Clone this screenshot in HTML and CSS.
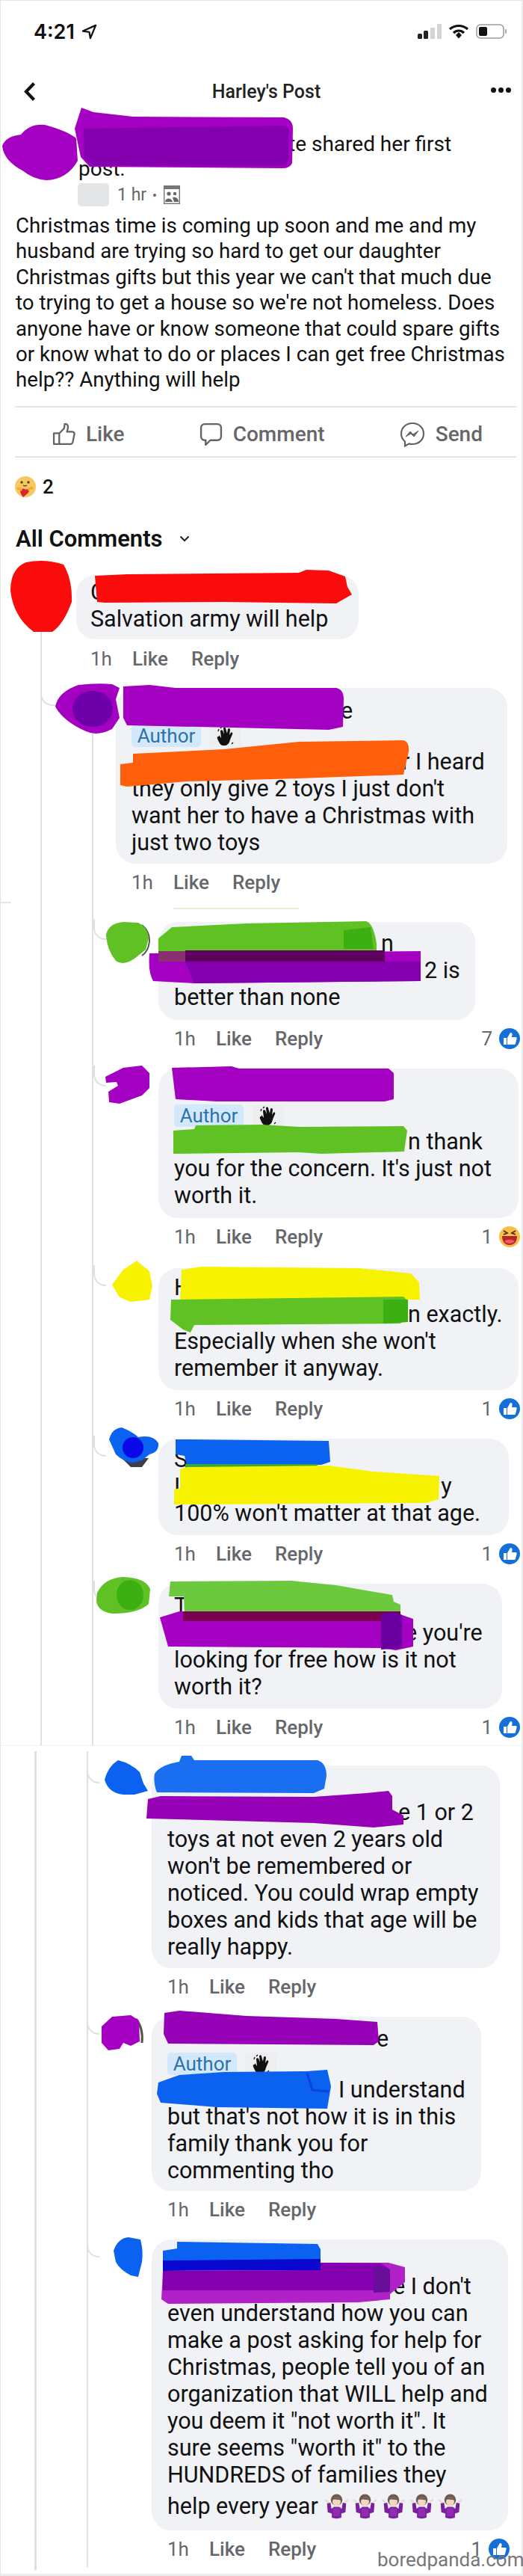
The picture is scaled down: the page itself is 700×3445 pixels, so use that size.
FILE: index.html
```html
<!DOCTYPE html>
<html lang="en">
<head>
<meta charset="UTF-8" />
<meta name="viewport" content="width=device-width, initial-scale=1" />
<title>Harley's Post</title>
<link rel="stylesheet" href="styles.css">
</head>
<body>
<svg class="defs" aria-hidden="true">
  <symbol id="like-badge" viewBox="0 0 28 28">
    <circle cx="14" cy="14" r="14" fill="#1470d8"/>
    <path d="M6 13h4v9H6z M11 13l4-7c2 0 3 1 2.500 3l-.5 3h5c1.500 0 2 1 1.500 2.500l-1.500 6c-.3 1-1 1.500-2 1.500h-9z" fill="#fff"/>
  </symbol>
  <symbol id="wave" viewBox="0 0 24 26">
    <path d="M5 3l2-2M2 7l1-3M20 24l2-2" stroke="#111" stroke-width="1.300" fill="none"/>
    <path d="M3 12l3 4-1-9c0-2 2-2 3-1l2 5-1-8c0-2 3-2 3 0l2 7 1-6c1-2 3-1 3 1l-1 7 2-3c1-1 3 0 2 2l-3 7c-1 6-5 9-10 8-4-1-5-5-7-9-1-2 1-4 2-3z" fill="#111"/>
  </symbol>
  <symbol id="shrug" viewBox="0 0 34 38">
    <path d="M0 10l5 3M34 10l-5 3" stroke="#e8dcc4" stroke-width="2.500" fill="none"/>
    <path d="M3 15L8 14 9.500 23 13 20H21L24.500 23 26 14 31 15 30 28 24 30V36Q17 38.500 10 36V30L4 28Z" fill="#7a1f9e"/>
    <path d="M12 22H22V34H12Z" fill="#8f2cb0"/>
    <circle cx="17" cy="10" r="8.500" fill="#6d5a52"/>
    <ellipse cx="17" cy="12.500" rx="6" ry="6.500" fill="#f5d5bd"/>
    <path d="M10.500 10c2-5 10-5 13 0-4.500 0-9-2-13 0z" fill="#6d5a52"/>
  </symbol>
</svg>

<div class="page">
  <div class="statusbar">
    <div class="clock">
      <span>4:21</span>
      <svg class="loc-arrow" viewBox="0 0 22 22"><path d="M20 2L2 10l9 1.500L12.500 20z" fill="none" stroke="#111" stroke-width="2.400" stroke-linejoin="round"/></svg>
    </div>
    <div class="status-icons">
      <svg class="signal" viewBox="0 0 33 20">
        <rect x="1" y="13" width="6" height="7" rx="1.500" fill="#222"/>
        <rect x="9" y="9" width="6" height="11" rx="1.500" fill="#222"/>
        <rect x="18" y="5" width="6" height="15" rx="1" fill="#d4d4d4"/>
        <rect x="27" y="0" width="6" height="20" rx="1" fill="#d4d4d4"/>
      </svg>
      <svg class="wifi" viewBox="0 0 28 20">
        <path d="M2 7c7-6 17-6 24 0" fill="none" stroke="#111" stroke-width="3.200"/>
        <path d="M7 12c4-4 10-4 14 0" fill="none" stroke="#111" stroke-width="3.200"/>
        <path d="M10 15l4-4 4 4-4 4.500z" fill="#111"/>
      </svg>
      <svg class="battery" viewBox="0 0 42 20">
        <rect x="1" y="1" width="36" height="18" rx="5" fill="#fff" stroke="#9a9a9a" stroke-width="1.500"/>
        <rect x="4" y="4" width="11" height="12" rx="2" fill="#111"/>
        <rect x="39" y="7" width="2" height="6" rx="1" fill="#aaa"/>
      </svg>
    </div>
  </div>

  <div class="navbar">
    <svg class="back" viewBox="0 0 16 27"><path d="M13.500 2.500L3 13.500 13.500 24.500" fill="none" stroke="#111" stroke-width="4.200"/></svg>
    <div class="nav-title">Harley's Post</div>
    <div class="nav-dots"><i></i><i></i><i></i></div>
  </div>

  <div class="post">
    <div class="post-head"><span class="skip skip-281"></span>te shared her first<br>post.</div>
    <div class="post-meta">
      <span class="page-thumb"></span>
      <span>1 hr</span>
      <span class="meta-dot"></span>
      <svg class="audience" viewBox="0 0 22 25">
        <rect x=".7" y=".7" width="20.600" height="23.600" fill="#fff" stroke="#777" stroke-width="1.400"/>
        <rect x="0" y="0" width="22" height="5" fill="#777"/>
        <circle cx="7" cy="11" r="2.600" fill="#666"/><circle cx="15" cy="11" r="2.200" fill="#666"/>
        <path d="M2 22c0-6 9-6 10 0zM12 16c4-1 8 1 8 6h-6z" fill="#666"/>
      </svg>
    </div>
    <p class="post-text">Christmas time is coming up soon and me and my<br>husband are trying so hard to get our daughter<br>Christmas gifts but this year we can't that much due<br>to trying to get a house so we're not homeless. Does<br>anyone have or know someone that could spare gifts<br>or know what to do or places I can get free Christmas<br>help?? Anything will help</p>
  </div>

  <div class="actions">
    <div class="action">
      <svg class="action-icon" viewBox="0 0 30 30"><path d="M2 14h7v14H2z M9 14l6-6c1-2 1-4 1-6 3-1 5 2 4 6l-1 4h7c2 0 3 2 2.500 3.500l-2 10c-.4 2-1.500 2.500-3 2.500H9" fill="none" stroke="#606368" stroke-width="2.200" stroke-linejoin="round"/></svg>
      Like
    </div>
    <div class="action">
      <svg class="action-icon" viewBox="0 0 30 30"><path d="M7 2h16c3 0 5 2 5 5v11c0 3-2 5-5 5H14l-6 6v-6H7c-3 0-5-2-5-5V7c0-3 2-5 5-5z" fill="none" stroke="#606368" stroke-width="2.300" stroke-linejoin="round"/></svg>
      Comment
    </div>
    <div class="action">
      <svg class="action-icon action-icon-send" viewBox="0 0 34 34"><path d="M17 2c8.500 0 15 6 15 14s-6.500 14-15 14c-1.500 0-3-.2-4.500-.6L7 32.500v-6C4 24 2 20.500 2 16 2 8 8.500 2 17 2z" fill="none" stroke="#606368" stroke-width="2.200"/><path d="M8 20l6-7 4 4 7-5-6 8-4-4z" fill="#606368" stroke="#606368" stroke-linejoin="round"/></svg>
      Send
    </div>
  </div>

  <div class="reactions">
    <svg class="care" viewBox="0 0 28 28">
      <circle cx="14" cy="14" r="14" fill="#f7c95c"/>
      <circle cx="9" cy="8" r="1.700" fill="#5a3a10"/><circle cx="18" cy="8" r="1.700" fill="#5a3a10"/>
      <path d="M11 12c2 1.500 3 1.500 5 0" stroke="#5a3a10" stroke-width="1.300" fill="none"/>
      <path d="M8 18c3-3 6-1 6 0 2-2 5-1 5 1 0 3-5 6-8 9-2-3-5-6-3-10z" fill="#d9232e"/>
      <path d="M3 17c3-2 5 0 6 2M24 16c-3-1-5 0-6 3" stroke="#f0a63c" stroke-width="3" fill="none"/>
    </svg>
    <span>2</span>
  </div>

  <div class="sort">All Comments
    <svg class="sort-caret" viewBox="0 0 14 9"><path d="M1.500 1.500L7 7l5.500-5.500" fill="none" stroke="#222" stroke-width="2"/></svg>
  </div>

  <div class="comment comment-top">
    <div class="avatar-col avatar-col-top">
      <div class="avatar avatar-top"></div>
      <div class="tail tail-top"></div>
    </div>
    <div class="comment-body">
      <div class="bubble b-first">
        <div class="line">C</div>
        <div class="line">Salvation army will help</div>
      </div>
      <div class="meta meta-first"><span class="meta-time">1h</span><span>Like</span><span>Reply</span></div>

      <div class="comment reply reply-mid">
        <div class="avatar-col">
          <div class="avatar"></div>
          <div class="tail"></div>
        </div>
        <div class="comment-body">
          <div class="bubble b-mid">
            <div class="line"><span class="skip skip-280"></span>e</div>
            <div class="badges"><span class="chip-author">Author</span><span class="chip-wave"><svg class="hand"><use href="#wave"/></svg></span></div>
            <div class="line"><span class="skip skip-362"></span>r I heard</div>
            <div class="line">they only give 2 toys I just don't</div>
            <div class="line">want her to have a Christmas with</div>
            <div class="line">just two toys</div>
          </div>
          <div class="meta"><span class="meta-time">1h</span><span>Like</span><span>Reply</span></div>

          <div class="comment reply reply-sub reply-after-seam">
            <div class="avatar-col"><div class="avatar"></div></div>
            <div class="comment-body">
              <div class="bubble b-none">
                <div class="line"><span class="skip skip-277"></span>n</div>
                <div class="line"><span class="skip skip-335"></span>2 is</div>
                <div class="line">better than none</div>
              </div>
              <div class="meta"><span class="meta-time">1h</span><span>Like</span><span>Reply</span>
                <span class="react">7<svg class="badge"><use href="#like-badge"/></svg></span></div>
            </div>
          </div>

          <div class="comment reply reply-sub">
            <div class="avatar-col"><div class="avatar"></div></div>
            <div class="comment-body">
              <div class="bubble b-concern">
                <div class="line">&nbsp;</div>
                <div class="badges"><span class="chip-author">Author</span><span class="chip-wave"><svg class="hand"><use href="#wave"/></svg></span></div>
                <div class="line"><span class="skip skip-313"></span>n thank</div>
                <div class="line">you for the concern. It's just not</div>
                <div class="line">worth it.</div>
              </div>
              <div class="meta"><span class="meta-time">1h</span><span>Like</span><span>Reply</span>
                <span class="react">1
                  <svg class="badge" viewBox="0 0 28 28">
                    <circle cx="14" cy="14" r="14" fill="#f6bf4a"/>
                    <path d="M6 6l5 3-5 2M22 6l-5 3 5 2" stroke="#4a2a10" stroke-width="1.800" fill="none"/>
                    <path d="M4 13h20c0 8-4 12-10 12S4 21 4 13z" fill="#b3242c"/>
                    <path d="M7 20c4-3 10-3 14 0-3 4-11 4-14 0z" fill="#ef5a5a"/>
                  </svg></span></div>
            </div>
          </div>

          <div class="comment reply reply-sub reply-gap-18">
            <div class="avatar-col"><div class="avatar"></div></div>
            <div class="comment-body">
              <div class="bubble b-exactly">
                <div class="line">H</div>
                <div class="line"><span class="skip skip-313"></span>n exactly.</div>
                <div class="line">Especially when she won't</div>
                <div class="line">remember it anyway.</div>
              </div>
              <div class="meta"><span class="meta-time">1h</span><span>Like</span><span>Reply</span>
                <span class="react">1<svg class="badge"><use href="#like-badge"/></svg></span></div>
            </div>
          </div>

          <div class="comment reply reply-sub">
            <div class="avatar-col"><div class="avatar"></div></div>
            <div class="comment-body">
              <div class="bubble b-age">
                <div class="line">S</div>
                <div class="line">I<span class="skip skip-349"></span>y</div>
                <div class="line">100% won't matter at that age.</div>
              </div>
              <div class="meta"><span class="meta-time">1h</span><span>Like</span><span>Reply</span>
                <span class="react">1<svg class="badge"><use href="#like-badge"/></svg></span></div>
            </div>
          </div>

          <div class="comment reply reply-sub">
            <div class="avatar-col"><div class="avatar"></div></div>
            <div class="comment-body">
              <div class="bubble b-free">
                <div class="line">T</div>
                <div class="line"><span class="skip skip-309"></span>e you're</div>
                <div class="line">looking for free how is it not</div>
                <div class="line">worth it?</div>
              </div>
              <div class="meta"><span class="meta-time">1h</span><span>Like</span><span>Reply</span>
                <span class="react">1<svg class="badge"><use href="#like-badge"/></svg></span></div>
            </div>
          </div>
        </div>
      </div>
    </div>
  </div>

  <div class="seam"></div>

  <div class="part-two">
    <div class="part-two-inner">
      <div class="comment reply reply-low reply-first-low">
        <div class="avatar-col"><div class="avatar"></div></div>
        <div class="comment-body">
          <div class="bubble b-toys">
            <div class="line">&nbsp;</div>
            <div class="line"><span class="skip skip-309"></span>e 1 or 2</div>
            <div class="line">toys at not even 2 years old</div>
            <div class="line">won't be remembered or</div>
            <div class="line">noticed. You could wrap empty</div>
            <div class="line">boxes and kids that age will be</div>
            <div class="line">really happy.</div>
          </div>
          <div class="meta"><span class="meta-time">1h</span><span>Like</span><span>Reply</span></div>
        </div>
      </div>

      <div class="comment reply reply-low">
        <div class="avatar-col"><div class="avatar"></div></div>
        <div class="comment-body">
          <div class="bubble b-family">
            <div class="line"><span class="skip skip-280"></span>e</div>
            <div class="badges"><span class="chip-author">Author</span><span class="chip-wave"><svg class="hand"><use href="#wave"/></svg></span></div>
            <div class="line"><span class="skip skip-229"></span>I understand</div>
            <div class="line">but that's not how it is in this</div>
            <div class="line">family thank you for</div>
            <div class="line">commenting tho</div>
          </div>
          <div class="meta"><span class="meta-time">1h</span><span>Like</span><span>Reply</span></div>
        </div>
      </div>

      <div class="comment reply reply-low">
        <div class="avatar-col"><div class="avatar"></div></div>
        <div class="comment-body">
          <div class="bubble b-hundreds">
            <div class="line">&nbsp;</div>
            <div class="line"><span class="skip skip-302"></span>e I don't</div>
            <div class="line">even understand how you can</div>
            <div class="line">make a post asking for help for</div>
            <div class="line">Christmas, people tell you of an</div>
            <div class="line">organization that WILL help and</div>
            <div class="line">you deem it "not worth it". It</div>
            <div class="line">sure seems "worth it" to the</div>
            <div class="line">HUNDREDS of families they</div>
            <div class="line line-emoji">help every year
              <span class="shrugs">
                <svg class="shrug"><use href="#shrug"/></svg>
                <svg class="shrug"><use href="#shrug"/></svg>
                <svg class="shrug"><use href="#shrug"/></svg>
                <svg class="shrug"><use href="#shrug"/></svg>
                <svg class="shrug"><use href="#shrug"/></svg>
              </span>
            </div>
          </div>
          <div class="meta"><span class="meta-time">1h</span><span>Like</span><span>Reply</span>
            <span class="react">1<svg class="badge"><use href="#like-badge"/></svg></span></div>
        </div>
      </div>
    </div>
  </div>

  <!-- marker scribbles painted over names and avatars -->
  <svg class="scribbles" viewBox="0 0 700 3445" aria-hidden="true">
    <path d="M0 1207H15" stroke="#dcdcdc" stroke-width="1.500"/>

    <!-- post author -->
    <path class="s-purple" d="M100 172L109 144 125 150 178 156 380 157Q392 160 392 172L391 218Q388 226 375 225L120 223 108 210Z"/>
    <path class="s-purple-d" d="M112 172L380 168Q388 170 386 180L386 214Q384 222 370 222L125 221 113 212Z"/>
    <path class="s-purple" d="M3 195Q8 182 28 180 40 165 60 167 90 175 102 185L104 215Q90 240 62 241 45 240 30 228 5 215 3 195Z"/>

    <!-- first comment -->
    <path class="s-red" d="M14 790Q14 760 35 752 60 747 85 755 97 775 96 805 85 835 70 845L45 845Q18 825 14 790Z"/>
    <path class="s-red" d="M127 770L170 768 400 766 410 762 440 763 462 771 465 785 471 795 450 807 300 805 140 806 130 805Z"/>

    <!-- author reply -->
    <path class="s-purple" d="M74 945Q78 925 105 916 130 913 150 915L160 920 155 935 160 960 150 975Q130 985 115 978 85 965 74 945Z"/>
    <ellipse class="s-purple-xd" cx="124" cy="948" rx="27" ry="24"/>
    <path class="s-purple" d="M165 918L200 916 235 920 450 920Q460 922 460 935L459 972 440 976 170 970 165 960Z"/>
    <path class="s-orange" d="M178 1008L300 1002 400 992 540 990Q548 992 547 1005L540 1036 400 1041 250 1045 170 1052 161 1050 161 1022 178 1020Z"/>

    <!-- 2 is better -->
    <path d="M232 1215H400" stroke="#c4e4b0" stroke-width="1"/>
    <path d="M190 1237Q200 1245 200 1258 199 1272 190 1278" stroke="#555" stroke-width="2" fill="none"/>
    <path class="s-green" d="M142 1250Q145 1235 165 1233L185 1234Q198 1240 199 1255L195 1270 180 1282Q165 1292 155 1285 143 1270 142 1250Z"/>
    <path class="s-green" d="M212 1255L230 1240 330 1235 490 1232Q500 1235 504 1262L504 1272 212 1275Z"/>
    <path class="s-green-d" d="M460 1244L496 1240 500 1269 460 1269Z"/>
    <path class="s-purple" d="M200 1275L563 1272 563 1312 260 1315 205 1312Q198 1300 200 1275Z"/>
    <path class="s-purple-d" d="M248 1286H563V1312L260 1315Z"/>
    <path d="M248 1271H515V1286H248Z" fill="#5d0060"/>
    <path d="M212 1272H248V1286H212Z" fill="#8a2f70"/>

    <!-- thank you for the concern -->
    <path class="s-purple" d="M141 1440L165 1428 190 1425 200 1435 200 1455 190 1465 160 1476 146 1474 145 1460 158 1452 156 1447 142 1448Z"/>
    <path class="s-purple" d="M230 1428L310 1426 320 1429 520 1429 527 1435 527 1470 515 1473 290 1473 235 1470Z"/>
    <path class="s-green" d="M232 1512L260 1510 262 1505 350 1504 400 1507 540 1506 545 1512 541 1540 430 1543 400 1541 232 1543Z"/>

    <!-- exactly -->
    <path class="s-yellow" d="M150 1718L165 1698 183 1686 200 1700 204 1720 200 1738 175 1741 160 1735Z"/>
    <path class="s-yellow" d="M243 1698L270 1694 480 1696 550 1703 561 1715 562 1738 241 1740Z"/>
    <path class="s-green" d="M229 1738L540 1734 546 1740 545 1765 535 1770 260 1772 255 1782 245 1778 228 1765Z"/>
    <path class="s-green-d" d="M513 1738H546V1768L513 1770Z"/>

    <!-- 100% -->
    <path d="M163 1950L175 1962 190 1962 199 1950Z" fill="#3a3f4a"/>
    <path class="s-blue" d="M146 1925Q150 1910 163 1909 178 1915 185 1922 205 1918 212 1930 213 1942 200 1945L190 1953 178 1956Q165 1955 155 1945Z"/>
    <circle cx="178" cy="1936" r="14" fill="#0808e8"/>
    <path class="s-blue" d="M235 1925L250 1925 440 1927 442 1955 430 1959 250 1960 247 1947 235 1945Z"/>
    <path d="M248 1958H425V1966H248Z" fill="#3ca83a"/>
    <path class="s-yellow" d="M241 1965L250 1962 440 1960 500 1968 588 1974 587 2005 570 2010 233 2012 233 1992 241 1990Z"/>

    <!-- looking for free -->
    <path class="s-green" d="M130 2130Q140 2110 165 2109 195 2110 201 2125L199 2145Q185 2158 150 2158 130 2155 129 2140Z"/>
    <ellipse class="s-green-d" cx="174" cy="2133" rx="18" ry="20"/>
    <path d="M228 2115L390 2114 450 2120 525 2133 527 2142 536 2146 536 2157 247 2160 246 2135 226 2135Z" fill="#6cc83c"/>
    <path class="s-purple" d="M214 2163L240 2155 530 2157 553 2165 553 2202 530 2207 510 2204 225 2202Z"/>
    <path d="M245 2155H536V2168H245Z" fill="#7a0050"/>
    <path d="M510 2160Q524 2152 538 2160V2204L510 2206Z" fill="#6a00a0"/>

    <!-- toys -->
    <path class="s-blue" d="M140 2380Q145 2362 158 2354 175 2358 187 2370L192 2385 198 2395 180 2400 165 2400Q145 2398 140 2380Z"/>
    <path class="s-blue-l" d="M207 2372Q215 2360 240 2356L243 2348 256 2348 260 2354 425 2354Q437 2358 437 2375L434 2392 420 2398 210 2397Q205 2385 207 2372Z"/>
    <path class="s-purple-m" d="M198 2406L215 2402 420 2403 490 2398 520 2395 525 2402 525 2420 540 2428 540 2440 500 2444 420 2438 196 2432Z"/>

    <!-- family -->
    <path d="M182 2700Q192 2712 190 2732" stroke="#554" stroke-width="3" fill="none"/>
    <path class="s-purple" d="M136 2710L150 2697 175 2695 186 2702 187 2730 175 2736 165 2732 160 2740 145 2742 136 2732Z"/>
    <path class="s-purple-m" d="M220 2692L240 2689 330 2696 450 2700 505 2704 507 2730 500 2735 225 2733 219 2720Z"/>
    <path class="s-blue" d="M212 2785L240 2775 300 2771 410 2770 438 2768 443 2790 438 2820 290 2818 215 2812 210 2800Z"/>
    <path d="M411 2772L418 2795 440 2797" stroke="#0a40e0" stroke-width="3" fill="none"/>

    <!-- hundreds -->
    <path class="s-blue" d="M152 3010Q158 2993 172 2992L188 2995Q192 3010 190 3025L185 3045 175 3043Q160 3035 155 3025Z"/>
    <path class="s-blue" d="M237 2998L425 3001 429 3008 429 3024 218 3033 218 3010 237 3007Z"/>
    <path d="M218 3023L429 3021V3036L218 3037Z" fill="#0808d0"/>
    <path d="M218 3037L429 3036 429 3026 520 3026 542 3032 542 3052 522 3068 522 3075 480 3079 225 3081 216 3075Z" fill="#b022c8"/>
    <path class="s-purple-d" d="M218 3037L429 3036V3026L510 3027 522 3035V3063L218 3063Z"/>
    <path d="M500 3030L522 3035V3065L500 3066Z" fill="#6a0d9a"/>
  </svg>

  <div class="watermark">boredpanda.com</div>
</div>
</body>
</html>
```

FILE: styles.css
```css
* {
  box-sizing: border-box;
}
body {
  margin: 0;
  font-family: Roboto, 'Liberation Sans', sans-serif;
  background-color: #fff;
  color: #111;
}
.defs {
  position: absolute;
  width: 0;
  height: 0;
}
.page {
  position: relative;
  width: 700px;
  height: 3445px;
  overflow: hidden;
  background-color: #fff;
  box-shadow: inset 1px 0 #e6e6e6, inset -2px 0 #ececec, inset 0 1px #e6e6e6, inset 0 -3px #ececec;
}

/* Status bar */
.statusbar {
  height: 84px;
  padding: 0 21px 0 45px;
  display: flex;
  align-items: center;
  justify-content: space-between;
}
.clock {
  display: flex;
  align-items: center;
  gap: 9px;
  font-family: Inter, sans-serif;
  font-size: 27px;
  font-weight: 600;
}
.loc-arrow {
  width: 21px;
  height: 21px;
}
.status-icons {
  display: flex;
  align-items: center;
  gap: 9px;
}
.signal {
  width: 33px;
  height: 20px;
}
.wifi {
  width: 28px;
  height: 20px;
}
.battery {
  width: 42px;
  height: 20px;
}

/* Nav */
.navbar {
  height: 76px;
  padding: 0 16px 0 32px;
  display: flex;
  align-items: center;
  justify-content: space-between;
}
.back {
  width: 16px;
  height: 27px;
}
.nav-title {
  margin-left: 8px;
  font-size: 25px;
  font-weight: 500;
  color: #222;
}
.nav-dots {
  display: flex;
  gap: 3px;
  margin-top: -4px;
}
.nav-dots i {
  width: 7px;
  height: 7px;
  border-radius: 50%;
  background-color: #111;
}

/* Post */
.post {
  padding: 16px 0 0 21px;
}
.post-head {
  padding-left: 84px;
  font-size: 28px;
  line-height: 33px;
  white-space: nowrap;
}
.post-meta {
  height: 31px;
  margin: 3px 0 0 83px;
  display: flex;
  align-items: center;
  font-size: 23px;
  color: #65676b;
}
.page-thumb {
  width: 42px;
  height: 31px;
  margin-right: 11px;
  border-radius: 5px;
  background-color: #e3e5e7;
}
.meta-dot {
  width: 4px;
  height: 4px;
  margin: 0 10px 0 9px;
  border-radius: 50%;
  background-color: #65676b;
}
.audience {
  width: 22px;
  height: 25px;
}
.post-text {
  margin: 9px 0 0;
  font-size: 27.700px;
  line-height: 34.400px;
  white-space: nowrap;
}

.skip {
  display: inline-block;
  height: 1px;
}
.skip-229 { width: 229px; }
.skip-277 { width: 277px; }
.skip-280 { width: 280px; }
.skip-281 { width: 281px; }
.skip-302 { width: 302px; }
.skip-309 { width: 309px; }
.skip-313 { width: 313px; }
.skip-335 { width: 335px; }
.skip-349 { width: 349px; }
.skip-362 { width: 362px; }

/* Like / Comment / Send */
.actions {
  height: 69px;
  margin: 17px 9px 0 20px;
  padding: 7px 45px 0 50px;
  border-top: 2px solid #e2e3e5;
  border-bottom: 2px solid #e2e3e5;
  display: flex;
  align-items: center;
  justify-content: space-between;
  font-size: 28px;
  font-weight: 500;
  color: #65676b;
}
.action {
  display: flex;
  align-items: center;
  gap: 14px;
}
.action-icon {
  width: 31px;
  height: 31px;
}
.action-icon-send {
  width: 34px;
  height: 34px;
}

.reactions {
  margin: 24px 0 0 20px;
  display: flex;
  align-items: center;
  gap: 9px;
  font-size: 26px;
  font-weight: 500;
}
.care {
  width: 28px;
  height: 28px;
}
.sort {
  margin: 37px 0 0 21px;
  display: flex;
  align-items: center;
  gap: 22px;
  font-size: 31px;
  line-height: 36px;
  font-weight: 600;
}
.sort-caret {
  width: 14px;
  height: 9px;
}

/* Comments */
.comment {
  display: flex;
}
.comment-top {
  margin-top: 30px;
  padding: 0 4px 0 20px;
  gap: 12px;
}
.comment-body {
  flex: 1;
  min-width: 0;
}
.avatar-col {
  width: 50px;
  flex: none;
  display: flex;
  flex-direction: column;
}
.avatar-col-top {
  width: 70px;
}
.avatar {
  height: 50px;
  flex: none;
}
.avatar-top {
  height: 70px;
}
.tail {
  flex: 1;
  margin-left: 24px;
  border-left: 2px solid #dfe0e3;
}
.tail-top {
  margin-left: 34px;
}

.reply {
  position: relative;
  margin-top: 16px;
}
.reply::before {
  content: "";
  position: absolute;
  top: -4px;
  left: -25px;
  width: 15px;
  height: 26px;
  border-left: 2px solid #dfe0e3;
  border-bottom: 2px solid #dfe0e3;
  border-bottom-left-radius: 16px;
}
.reply-mid {
  margin-top: 15px;
  margin-left: -3px;
  gap: 6px;
}
.reply-mid::before {
  left: -45px;
  width: 24px;
}
.reply-sub {
  margin-left: -5px;
  gap: 12px;
}
.reply-after-seam {
  margin-top: 29px;
}
.reply-gap-18 {
  margin-top: 18px;
}
.reply-low {
  gap: 12px;
}
.reply-first-low {
  margin-top: 0;
}

.bubble {
  padding: 12px 0 12px 21px;
  border-radius: 26px;
  background-color: #f0f2f6;
  font-size: 30.500px;
  white-space: nowrap;
}
.line {
  height: 36px;
  line-height: 36px;
}
.line-emoji {
  height: 48px;
  line-height: 48px;
  display: flex;
  align-items: center;
  gap: 9px;
}
.b-first { width: 378px; padding: 5px 0 9px 19px; }
.b-mid { width: 524px; padding: 13px 0 10px 21px; }
.b-none { width: 424px; padding: 11px 0 12px 21px; }
.b-concern { width: 482px; }
.b-exactly { width: 482px; padding: 8px 0 11px 21px; }
.b-age { width: 469px; padding: 10px 0 11px 21px; }
.b-free { width: 460px; padding: 12px 0 11px 21px; }
.b-toys { width: 466px; padding: 9px 0 10px 21px; }
.b-family { width: 441px; padding: 12px 0 9px 21px; }
.b-hundreds { width: 477px; padding: 9px 0 8px 21px; }

.badges {
  height: 32px;
  display: flex;
  align-items: flex-start;
  gap: 11px;
}
.chip-author {
  width: 93px;
  height: 30px;
  line-height: 30px;
  border-radius: 5px;
  background-color: #d3e9fb;
  color: #2c72ad;
  font-size: 26px;
  text-align: center;
}
.chip-wave {
  width: 43px;
  height: 30px;
  border-radius: 5px;
  background-color: #eceef0;
  display: flex;
  align-items: center;
  justify-content: center;
}
.hand {
  width: 24px;
  height: 26px;
}
.shrugs {
  display: flex;
  gap: 7px;
}
.shrug {
  width: 31px;
  height: 35px;
}

.meta {
  height: 48px;
  margin-top: 1px;
  padding-left: 21px;
  display: flex;
  align-items: center;
  gap: 31px;
  font-size: 26px;
  font-weight: 500;
  color: #65676b;
}
.meta-first {
  margin-top: 2px;
  padding-left: 19px;
}
.meta-time {
  width: 25px;
  font-weight: 400;
}
.react {
  margin-left: auto;
  display: flex;
  align-items: center;
  gap: 9px;
  font-weight: 400;
}
.badge {
  width: 28px;
  height: 28px;
}

/* second screenshot, stitched below the first */
.seam {
  height: 8px;
  border-top: 1px solid #f1f1f1;
}
.part-two {
  margin-left: 46px;
  padding: 0 18px 4px 67px;
  border-left: 3px solid #dfe0e3;
}
.part-two-inner {
  padding: 19px 0 0 23px;
  border-left: 2px solid #dfe0e3;
}

/* Marker scribbles */
.scribbles {
  position: absolute;
  top: 0;
  left: 0;
  width: 700px;
  height: 3445px;
}
.s-purple { fill: #a400c2; }
.s-purple-m { fill: #9600b6; }
.s-purple-d { fill: #8400ae; }
.s-purple-xd { fill: #6d00a8; }
.s-red { fill: #fb0c0c; }
.s-orange { fill: #ff5f0a; }
.s-green { fill: #5fc124; }
.s-green-d { fill: #3cb012; }
.s-yellow { fill: #f6f200; }
.s-blue { fill: #0b62f0; }
.s-blue-l { fill: #1a6ff0; }

.watermark {
  position: absolute;
  top: 3405px;
  left: 505px;
  font-size: 26px;
  line-height: 36px;
  color: #777;
}
```
